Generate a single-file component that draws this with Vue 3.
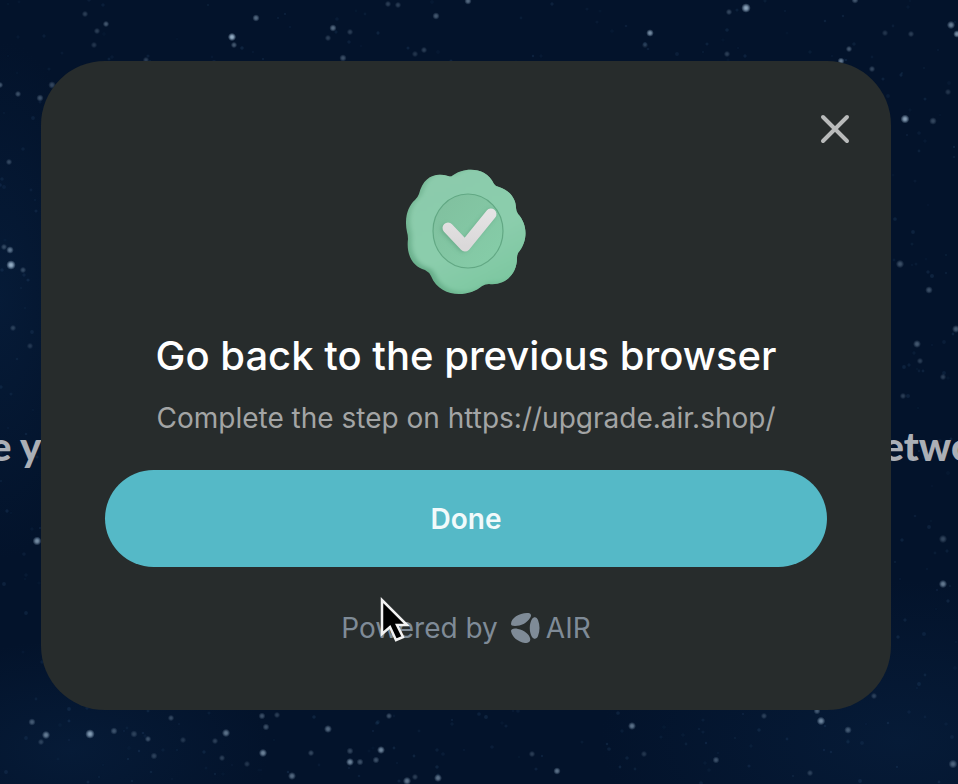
<template>
  <div class="page">
    <div class="backdrop" aria-hidden="true">
      <svg class="sky" viewBox="0 0 958 784" preserveAspectRatio="xMidYMid slice">
        <defs>
          <radialGradient id="haze">
            <stop offset="0" stop-color="#08203f" stop-opacity="0.6" />
            <stop offset="1" stop-color="#08203f" stop-opacity="0" />
          </radialGradient>
          <radialGradient id="star">
            <stop offset="0" stop-color="#b4cce0" />
            <stop offset="0.4" stop-color="#a9c4dc" stop-opacity="0.8" />
            <stop offset="1" stop-color="#a9c4dc" stop-opacity="0" />
          </radialGradient>
        </defs>
        <ellipse cx="70" cy="750" rx="200" ry="110" fill="url(#haze)" />
        <ellipse cx="0" cy="300" rx="100" ry="260" fill="url(#haze)" />
        <ellipse cx="900" cy="740" rx="300" ry="160" fill="url(#haze)" />
        <circle v-for="(d, i) in dust" :key="'d' + i" :cx="d.x" :cy="d.y" :r="d.r" fill="#4a78a8" :opacity="d.o" />
        <circle v-for="(s, i) in stars" :key="'s' + i" :cx="s[0]" :cy="s[1]" :r="s[2] * 1.6" fill="url(#star)" :opacity="s[3]" />
      </svg>
      <div class="headline">
        <span>e y</span>
        <span>etwo</span>
      </div>
    </div>

    <main class="overlay">
      <section class="card" role="dialog" aria-labelledby="dialog-title">
        <button class="close" type="button" aria-label="Close">
          <svg viewBox="0 0 32 32" width="32" height="32">
            <path d="M4 4l24 24M28 4L4 28" fill="none" stroke="#b9bbbb" stroke-width="4" stroke-linecap="round" />
          </svg>
        </button>

        <svg class="badge" viewBox="0 0 120 126" width="120" height="126">
          <defs>
            <linearGradient id="rim" x1="0" y1="0" x2="1" y2="1">
              <stop offset="0" stop-color="#7dbd9c" />
              <stop offset="0.5" stop-color="#66ad89" />
              <stop offset="1" stop-color="#74c299" />
            </linearGradient>
            <linearGradient id="face" x1="0.2" y1="0" x2="0.7" y2="1">
              <stop offset="0" stop-color="#8ccbac" />
              <stop offset="0.6" stop-color="#8bcdac" />
              <stop offset="1" stop-color="#7cc7a0" />
            </linearGradient>
            <linearGradient id="disc" x1="0" y1="0" x2="1" y2="1">
              <stop offset="0" stop-color="#80bf9e" />
              <stop offset="1" stop-color="#86cea9" />
            </linearGradient>
            <linearGradient id="tick" x1="0" y1="0" x2="0" y2="1">
              <stop offset="0" stop-color="#e5e3e4" />
              <stop offset="1" stop-color="#dad8d9" />
            </linearGradient>
            <filter id="soft" x="-30%" y="-30%" width="160%" height="160%">
              <feGaussianBlur stdDeviation="2" />
            </filter>
            <clipPath id="rim-clip"><path :d="rimPath" /></clipPath>
          </defs>
          <path :d="rimPath" fill="url(#rim)" />
          <g clip-path="url(#rim-clip)">
            <path :d="rimPath" fill="url(#face)" filter="url(#soft)" transform="translate(4 -2)" />
          </g>
          <ellipse cx="62" cy="62" rx="35" ry="37" fill="url(#disc)" stroke="#62a884" stroke-width="1.2" />
          <path d="M40 60l17 18 28-33" fill="none" stroke="#4f9371" stroke-width="10" stroke-linecap="round" stroke-linejoin="round" opacity="0.5" filter="url(#soft)" />
          <path d="M42 59l17 18 26-32" fill="none" stroke="url(#tick)" stroke-width="11" stroke-linecap="round" stroke-linejoin="round" />
        </svg>

        <h1 id="dialog-title" class="title">Go back to the previous browser</h1>
        <p class="subtitle">Complete the step on https://upgrade.air.shop/</p>
        <button class="done" type="button">Done</button>

        <footer class="powered">
          <span>Powered by</span>
          <span class="brand">
            <svg viewBox="0 0 30 30" width="30" height="30" fill="#7f8b97">
              <path d="M1 11C1 5 9 0 17 0c4 0 5 2 3 5-3 5-9 8-15 8-3 0-4-1-4-2z" />
              <path d="M1 18c0-2 3-3 7-2 6 1 11 5 12 9 1 3-1 5-5 5C8 29 2 24 1 18z" />
              <path d="M22 6c2-3 5-2 6 1 2 5 2 11 0 16-1 3-4 4-6 1-3-5-3-13 0-18z" />
            </svg>
            <span>AIR</span>
          </span>
        </footer>

        <svg class="cursor" viewBox="0 0 30 46" width="30" height="46" aria-hidden="true">
          <path d="M2 3v34l8-7 6 13 7-3-6-12h10z" fill="#000" stroke="#f2f2f2" stroke-width="2.5" stroke-linejoin="miter" />
        </svg>
      </section>
    </main>
  </div>
</template>

<script setup>
// x, y, radius, opacity
const stars = [
  [232, 37, 2.6, 0.9], [234, 45, 2, 0.4], [256, 18, 2.3, 0.5], [106, 24, 2, 0.4], [97, 31, 2, 0.25],
  [85, 14, 2, 0.25], [94, 45, 2, 0.2], [333, 28, 2.3, 0.5], [328, 38, 2, 0.25], [350, 32, 2, 0.25],
  [436, 16, 2.3, 0.4], [468, 1, 2.3, 0.5], [398, 5, 2, 0.25], [388, 4, 2, 0.25], [424, 50, 2, 0.25],
  [415, 54, 2, 0.2], [343, 58, 2.3, 0.35], [146, 60, 2, 0.25], [650, 33, 2.4, 0.7], [746, 8, 3, 0.85],
  [729, 12, 2, 0.3], [727, 54, 2, 0.25], [645, 45, 2, 0.2], [855, 0, 2.3, 0.4], [951, 25, 2.6, 0.6],
  [957, 34, 2.4, 0.7], [849, 49, 2, 0.4], [841, 61, 2.2, 0.6], [911, 34, 2, 0.25], [885, 33, 2, 0.2],
  [872, 69, 2, 0.3], [905, 119, 2.8, 0.8], [933, 121, 2.4, 0.3], [948, 92, 2, 0.2],
  [18, 94, 2, 0.35], [40, 98, 2.3, 0.35], [0, 85, 2, 0.4], [9, 162, 2, 0.3], [52, 85, 2.4, 0.3],
  [10, 250, 2.4, 0.55], [11, 265, 3, 0.9], [4, 247, 2, 0.3], [23, 270, 2, 0.3], [13, 328, 2, 0.25],
  [30, 346, 2, 0.2], [37, 541, 2.8, 0.7],
  [32, 722, 2.3, 0.4], [46, 735, 2.6, 0.6], [41, 742, 2, 0.25], [90, 734, 3, 0.8], [114, 731, 2.3, 0.35],
  [134, 734, 2.3, 0.25], [148, 739, 2, 0.35], [154, 756, 2.2, 0.25], [171, 718, 2, 0.3], [183, 740, 2, 0.2],
  [215, 741, 2, 0.25], [226, 733, 2.6, 0.55], [222, 758, 2, 0.25], [247, 764, 2, 0.2], [262, 716, 2.2, 0.35],
  [266, 727, 2.2, 0.35], [277, 715, 2, 0.25], [263, 753, 2.6, 0.65], [292, 776, 2.5, 0.5], [311, 753, 2, 0.3],
  [328, 729, 2.5, 0.5], [350, 751, 2.2, 0.3], [350, 762, 2.5, 0.65], [360, 762, 2.2, 0.35], [381, 750, 2.5, 0.65],
  [376, 760, 2.2, 0.35], [389, 716, 2, 0.35], [407, 781, 2.6, 0.55], [438, 778, 2.5, 0.55], [415, 777, 2, 0.25],
  [632, 726, 2.5, 0.55], [557, 771, 2.3, 0.55], [532, 754, 2, 0.25], [644, 754, 2, 0.2], [716, 760, 2.2, 0.35],
  [821, 721, 2.7, 0.65], [817, 711, 2.2, 0.4], [848, 730, 2.4, 0.4], [764, 716, 2, 0.25], [810, 773, 2, 0.25],
  [953, 764, 2.8, 0.45], [874, 696, 2, 0.25], [943, 539, 2.6, 0.3], [900, 264, 2.6, 0.35], [929, 290, 2.4, 0.35],
  [956, 329, 2.5, 0.4], [917, 344, 2.5, 0.4], [920, 361, 2, 0.25], [943, 377, 2, 0.25], [903, 396, 2, 0.25],
  [943, 584, 2.6, 0.6]
]

// faint background dust, seeded so it stays put between renders
let seed = 17
function rand() {
  seed = (seed * 16807) % 2147483647
  return seed / 2147483647
}
const dust = Array.from({ length: 1100 }, () => ({
  x: Math.round(rand() * 958),
  y: Math.round(rand() * 784),
  r: 1 + rand(),
  o: 0.04 + rand() * 0.12
}))

// scalloped outline with eight lobes
const rimPath = 'M46 7C57 -2 80 -3 88 15Q90 18 93 18C103 21 110 29 110 39Q110 42 112 45C122 56 122 72 112 84Q111 86 111 89C111 106 98 117 83 115Q79 115 76 117C62 129 34 129 25 107Q23 103 19 101C7 98 0 86 2 70Q2 66 1 63C-2 49 2 37 9 31Q12 28 13 25C17 8 29 3 42 7Q45 8 46 7Z'
</script>

<style>
body {
  margin: 0;
  background: #03132b;
}
</style>

<style scoped>
.page {
  display: grid;
  min-height: 100vh;
  overflow: hidden;
  background: #03132b;
  font-family: Inter, "Liberation Sans", sans-serif;
}
.backdrop,
.overlay {
  grid-area: 1 / 1;
  min-width: 0;
}
.backdrop {
  position: relative;
  display: flex;
  align-items: center;
  overflow: hidden;
}
.sky {
  position: absolute;
  inset: 0;
  width: 100%;
  height: 100%;
}
/* runs past both edges of the window */
.headline {
  position: relative;
  display: flex;
  flex: 1 0 auto;
  justify-content: space-between;
  margin: 108px -16px 0 -10px;
  color: #abafb6;
  font-family: Lato, sans-serif;
  font-size: 40px;
  font-weight: 900;
  line-height: 48px;
  white-space: nowrap;
}
.overlay {
  position: relative;
  display: flex;
  align-items: center;
  justify-content: center;
  padding: 61px 67px 74px 41px;
}
.card {
  position: relative;
  box-sizing: border-box;
  display: flex;
  flex-direction: column;
  align-items: center;
  width: 100%;
  max-width: 850px;
  padding: 108px 64px 64px;
  border-radius: 64px;
  background: #272c2c;
}
.close {
  position: absolute;
  top: 52px;
  right: 40px;
  width: 32px;
  height: 32px;
  padding: 0;
  border: 0;
  background: none;
  cursor: pointer;
}
.close svg,
.badge {
  display: block;
}
.title {
  margin: 35px 0 0;
  color: #fff;
  font-size: 40px;
  font-weight: 500;
  line-height: 52px;
  text-align: center;
}
.subtitle {
  margin: 16px 0 0;
  color: #a3a5a5;
  font-size: 28px;
  line-height: 40px;
  text-align: center;
}
.done {
  width: 100%;
  height: 97px;
  margin-top: 32px;
  padding: 0;
  border: 0;
  border-radius: 49px;
  background: #55b9c7;
  color: #f2fafb;
  font-family: inherit;
  font-size: 28px;
  font-weight: 600;
  cursor: pointer;
}
.powered {
  display: flex;
  align-items: center;
  gap: 12px;
  margin-top: 43px;
  color: #7f8b97;
  font-size: 28px;
  line-height: 36px;
}
.brand {
  display: flex;
  align-items: center;
  gap: 6px;
}
.cursor {
  position: absolute;
  top: 536px;
  left: 339px;
}
</style>
